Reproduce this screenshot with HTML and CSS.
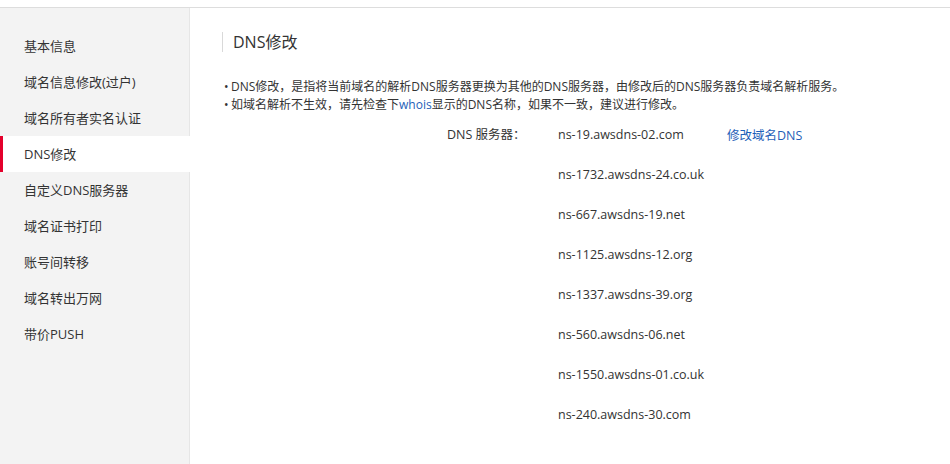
FILE: index.html
```html
<!DOCTYPE html>
<html lang="zh-CN">
<head>
<meta charset="utf-8">
<title>DNS修改</title>
<link rel="stylesheet" href="styles.css">
</head>
<body>
<div class="page">
  <aside class="sidebar">
    <ul class="menu">
      <li class="menu-item">基本信息</li>
      <li class="menu-item">域名信息修改(过户)</li>
      <li class="menu-item">域名所有者实名认证</li>
      <li class="menu-item active">DNS修改</li>
      <li class="menu-item">自定义DNS服务器</li>
      <li class="menu-item">域名证书打印</li>
      <li class="menu-item">账号间转移</li>
      <li class="menu-item">域名转出万网</li>
      <li class="menu-item">带价PUSH</li>
    </ul>
  </aside>
  <main class="main">
    <h2 class="title">DNS修改</h2>
    <ul class="notes">
      <li>DNS修改，是指将当前域名的解析DNS服务器更换为其他的DNS服务器，由修改后的DNS服务器负责域名解析服务。</li>
      <li>如域名解析不生效，请先检查下<a class="link" href="#">whois</a>显示的DNS名称，如果不一致，建议进行修改。</li>
    </ul>
    <div class="dns">
      <div class="dns-label">DNS 服务器：</div>
      <ul class="dns-list">
        <li>ns-19.awsdns-02.com</li>
        <li>ns-1732.awsdns-24.co.uk</li>
        <li>ns-667.awsdns-19.net</li>
        <li>ns-1125.awsdns-12.org</li>
        <li>ns-1337.awsdns-39.org</li>
        <li>ns-560.awsdns-06.net</li>
        <li>ns-1550.awsdns-01.co.uk</li>
        <li>ns-240.awsdns-30.com</li>
      </ul>
      <a class="link dns-edit" href="#">修改域名DNS</a>
    </div>
  </main>
</div>
</body>
</html>
```

FILE: styles.css
```css
* { box-sizing: border-box; }
html, body {
  margin: 0;
  padding: 0;
  background: #fff;
  font-family: "Open Sans", "Noto Sans CJK SC", sans-serif;
  color: #333;
}
.page {
  margin-top: 7px;
  border-top: 1px solid #dddddd;
  display: flex;
  min-height: 457px;
}
.sidebar {
  width: 190px;
  flex: none;
  background: #f3f3f3;
  border-right: 1px solid #e6e6e6;
  padding-top: 20px;
}
.menu {
  list-style: none;
  margin: 0;
  padding: 0;
}
.menu-item {
  height: 36px;
  line-height: 36px;
  padding-left: 24px;
  font-size: 13px;
  color: #333;
  white-space: nowrap;
}
.menu-item.active {
  background: #fff;
  border-left: 3px solid #e4002b;
  padding-left: 21px;
  margin-right: -1px;
}
.main {
  flex: 1;
  padding: 24px 0 0 32px;
}
.title {
  margin: 0;
  border-left: 1px solid #d9d9d9;
  padding-left: 10px;
  height: 20px;
  line-height: 20px;
  font-size: 16px;
  font-weight: normal;
  color: #333;
}
.notes {
  list-style: none;
  margin: 26px 0 0;
  padding: 0 0 0 2px;
  font-size: 12px;
  line-height: 18px;
  color: #333;
}
.notes li::before {
  content: "•";
  display: inline-block;
  width: 7px;
}
.link {
  color: #1f5fb8;
  text-decoration: none;
}
.dns {
  display: flex;
  align-items: flex-start;
  margin-top: 11px;
  padding-left: 225px;
  font-size: 12.5px;
  line-height: 20px;
}
.dns-label {
  width: 111px;
  flex: none;
}
.dns-list {
  list-style: none;
  margin: 0;
  padding: 0;
  width: 169px;
  flex: none;
}
.dns-list li {
  height: 40px;
}
.dns-edit {
  padding-top: 1px;
}
```
